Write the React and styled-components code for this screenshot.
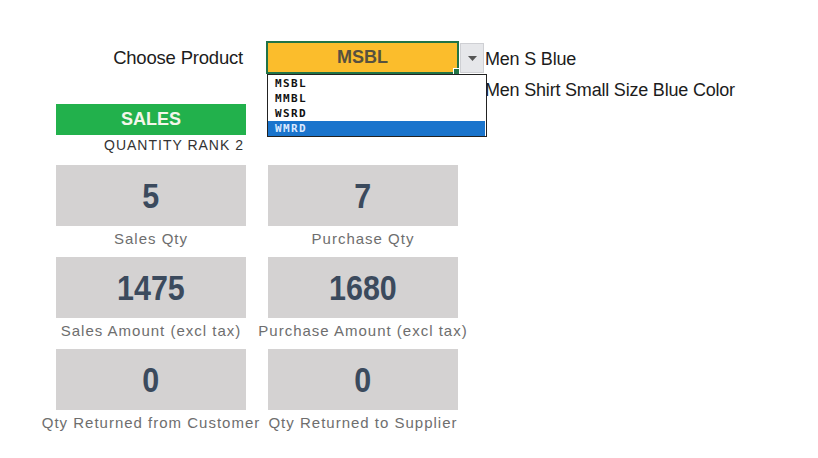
import React from "react";
import styled, { createGlobalStyle } from "styled-components";

const GlobalStyle = createGlobalStyle`
  body {
    margin: 0;
    background: #ffffff;
    font-family: "Liberation Sans", Arial, sans-serif;
  }
`;

const products = ["MSBL", "MMBL", "WSRD", "WMRD"];

const tiles = [
  { value: "5", label: "Sales Qty" },
  { value: "7", label: "Purchase Qty" },
  { value: "1475", label: "Sales Amount (excl tax)" },
  { value: "1680", label: "Purchase Amount (excl tax)" },
  { value: "0", label: "Qty Returned from Customer" },
  { value: "0", label: "Qty Returned to Supplier" },
];

const App = () => {
  return (
    <>
      <GlobalStyle />
      <Page>
        <TopRow>
          <LeftCol>
            <ChooseLabel>Choose Product</ChooseLabel>
            <SalesBar>SALES</SalesBar>
            <RankText>QUANTITY RANK 2</RankText>
          </LeftCol>
          <SelectWrap>
            <Cell>
              MSBL
              <Handle />
            </Cell>
            <ArrowBtn>
              <svg width="9" height="5" viewBox="0 0 9 5">
                <path d="M0 0h9L4.5 5z" fill="#555" />
              </svg>
            </ArrowBtn>
            <DropList>
              {products.map((p) => (
                <DropItem key={p} $active={p === "WMRD"}>
                  {p}
                </DropItem>
              ))}
            </DropList>
          </SelectWrap>
          <Desc>
            <DescLine>Men S Blue</DescLine>
            <DescLine>Men Shirt Small Size Blue Color</DescLine>
          </Desc>
        </TopRow>
        <Grid>
          {tiles.map((t, i) => (
            <Tile key={i}>
              <ValueBox>
                <Value>{t.value}</Value>
              </ValueBox>
              <TileLabel>{t.label}</TileLabel>
            </Tile>
          ))}
        </Grid>
      </Page>
    </>
  );
};

export default App;

const Page = styled.div`
  width: 818px;
  height: 458px;
  box-sizing: border-box;
  padding: 41px 0 0 56px;
  overflow: hidden;
`;

const TopRow = styled.div`
  display: flex;
  align-items: flex-start;
`;

const LeftCol = styled.div`
  width: 190px;
  display: flex;
  flex-direction: column;
`;

const ChooseLabel = styled.div`
  height: 33px;
  display: flex;
  align-items: center;
  justify-content: flex-end;
  padding-right: 3px;
  font-size: 18.5px;
  color: #1c1c1c;
  letter-spacing: -0.2px;
`;

const SalesBar = styled.div`
  margin-top: 30px;
  height: 31px;
  background: #22b14c;
  color: #f4f6ea;
  font-weight: 700;
  font-size: 18px;
  display: flex;
  align-items: center;
  justify-content: center;
`;

const RankText = styled.div`
  height: 20px;
  display: flex;
  align-items: center;
  justify-content: flex-end;
  padding-right: 2px;
  font-size: 14px;
  letter-spacing: 1px;
  color: #333;
`;

const SelectWrap = styled.div`
  position: relative;
  display: flex;
  align-items: flex-start;
  margin-left: 20px;
`;

const Cell = styled.div`
  position: relative;
  width: 193px;
  height: 33px;
  box-sizing: border-box;
  border: 2px solid #217346;
  background: #fbbd2c;
  display: flex;
  align-items: center;
  justify-content: center;
  font-weight: 700;
  font-size: 18px;
  color: #57513f;
`;

const Handle = styled.span`
  position: absolute;
  right: -3px;
  bottom: -3px;
  width: 5px;
  height: 5px;
  background: #217346;
  border: 1px solid #fff;
`;

const ArrowBtn = styled.div`
  width: 24px;
  height: 30px;
  margin: 2px 0 0 1px;
  box-sizing: border-box;
  background: #e6e7ea;
  border: 1px solid #cfd0d4;
  display: flex;
  align-items: center;
  justify-content: center;
`;

const DropList = styled.div`
  position: absolute;
  top: 33px;
  left: 1px;
  width: 220px;
  height: 63px;
  box-sizing: border-box;
  border: 1px solid #222;
  background: #fff;
  padding-top: 1px;
`;

const DropItem = styled.div`
  height: 15px;
  margin-right: 1px;
  padding-left: 7px;
  display: flex;
  align-items: center;
  font-size: 11px;
  font-weight: 700;
  letter-spacing: 1.4px;
  font-family: "DejaVu Sans Mono", monospace;
  color: ${(p) => (p.$active ? "#dbe9ff" : "#111")};
  background: ${(p) => (p.$active ? "#1a74cc" : "transparent")};
`;

const Desc = styled.div`
  margin: 3px 0 0 1px;
  display: flex;
  flex-direction: column;
`;

const DescLine = styled.div`
  height: 31px;
  line-height: 31px;
  font-size: 18px;
  color: #1c1c1c;
  letter-spacing: -0.2px;
  white-space: nowrap;
`;

const Grid = styled.div`
  margin-top: 10px;
  display: grid;
  grid-template-columns: 190px 190px;
  column-gap: 22px;
`;

const Tile = styled.div`
  display: flex;
  flex-direction: column;
  align-items: center;
`;

const ValueBox = styled.div`
  width: 100%;
  height: 61px;
  background: #d4d2d2;
  display: flex;
  align-items: center;
  justify-content: center;
`;

const Value = styled.span`
  display: inline-block;
  transform: scaleX(0.87);
  font-weight: 700;
  font-size: 35px;
  color: #3b4a5d;
`;

const TileLabel = styled.div`
  height: 31px;
  line-height: 26px;
  font-size: 15px;
  letter-spacing: 1px;
  color: #6e6e6e;
  white-space: nowrap;
`;
